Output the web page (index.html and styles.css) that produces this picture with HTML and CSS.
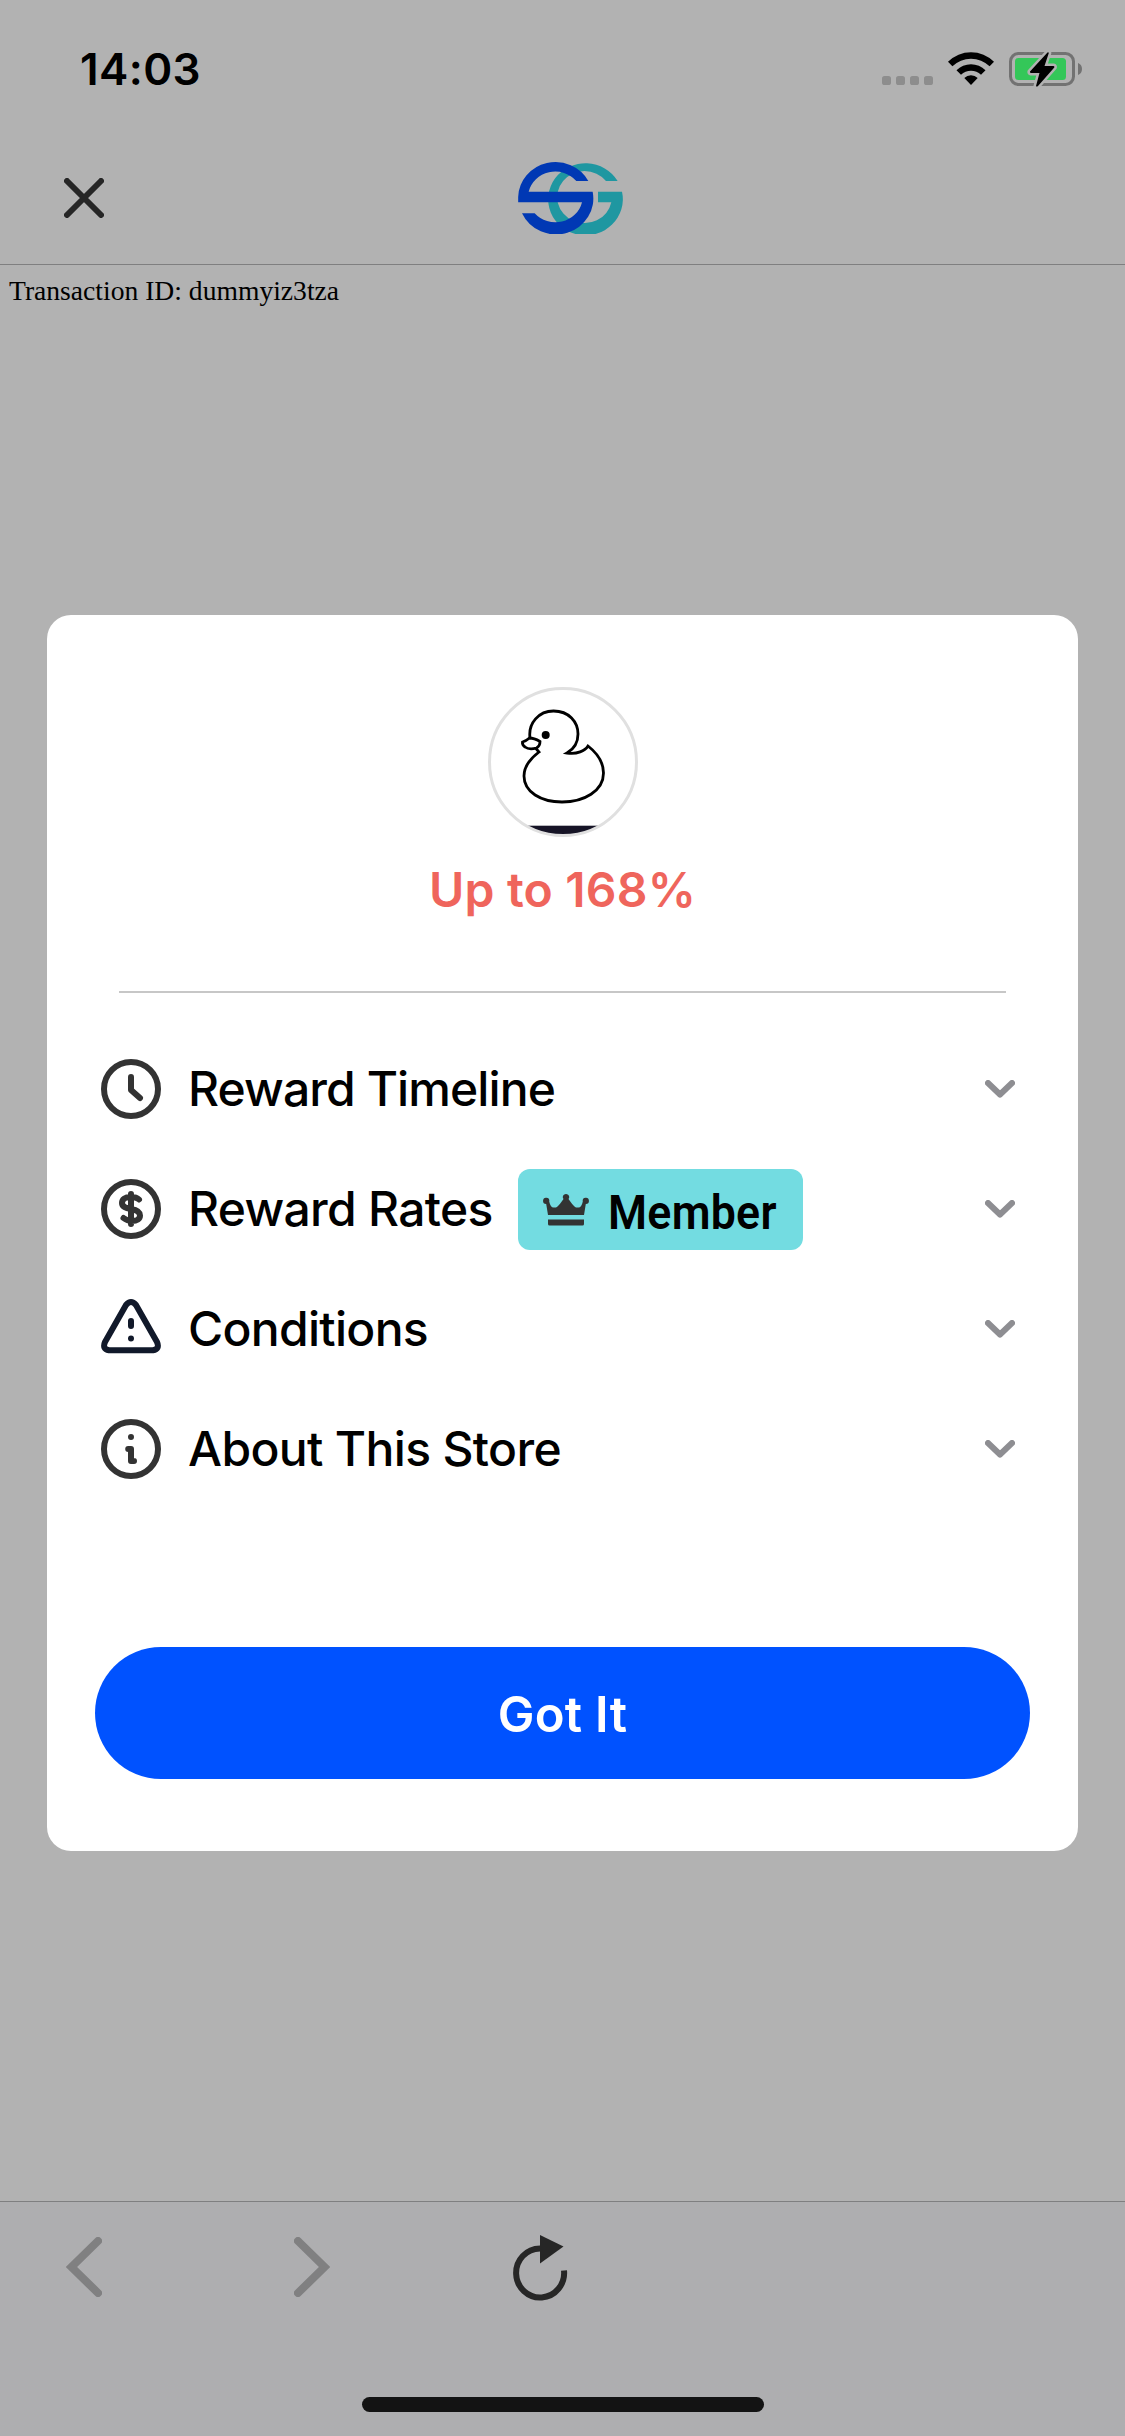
FILE: index.html
```
<!DOCTYPE html>
<html lang="en">
<head>
<meta charset="utf-8">
<title>Store rewards</title>
<link rel="stylesheet" href="styles.css">
</head>
<body>
<div class="screen">
  <div class="status">
    <span class="time">14:03</span>
    <svg class="status-icons" width="202" height="36" viewBox="0 0 202 36">
      <g fill="#8d8d8d"><rect x="0" y="25" width="9" height="9" rx="2.6"/><rect x="14" y="25" width="9" height="9" rx="2.6"/><rect x="28" y="25" width="9" height="9" rx="2.6"/><rect x="42" y="25" width="9" height="9" rx="2.6"/></g>
      <path d="M66 10.8A32.500 32.500 0 0 1 112 10.800L107.600 15.300A26.500 26.500 0 0 0 70.400 15.300ZM74.500 19.200A20.500 20.500 0 0 1 103.500 19.200L99 23.700A14.500 14.500 0 0 0 79 23.700ZM82.300 27A9.700 9.700 0 0 1 95.700 27L89 34Z"/>
      <rect x="128.500" y="2.500" width="63" height="31" rx="8" fill="none" stroke="#727272" stroke-width="3"/>
      <rect x="133" y="7" width="51" height="22" rx="3.500" fill="#34c759"/>
      <path d="M196 12Q200 13.500 200 18Q200 22.500 196 24Z" fill="#727272"/>
      <path d="M165.500 1.500L148 20.500Q147.500 21.800 149 22H157.500L154 35Q154.500 36 156 35L172.300 16.500Q172.800 15.200 171.500 15H162.500L166.800 2Q166.500 1 165.500 1.500Z" stroke="#b2b2b2" stroke-width="5" paint-order="stroke"/>
    </svg>
  </div>
  <div class="header">
    <svg class="close" width="40" height="40" viewBox="0 0 40 40"><path d="M3 3L37 37M37 3L3 37" stroke="#262626" stroke-width="6" stroke-linecap="round"/></svg>
    <svg class="logo" width="105" height="73" viewBox="54 66 315 219">
      <path fill="#1f97a1" d="M353 126A112 108 0 1 0 366 158H294V190H334A82 78 0 1 1 318 126Z"/>
      <path fill="#0038b4" d="M54.500 189.500V174A112 108 0 0 1 265 126H229A82 78 0 0 0 86 158H278A112 108 0 0 1 66 223H104A82 78 0 0 0 246 189.500Z"/>
    </svg>
  </div>
  <main class="page">
    <p class="transaction">Transaction ID: dummyiz3tza</p>
    <section class="modal">
      <svg class="avatar" width="150" height="150" viewBox="0 0 150 150">
        <defs><clipPath id="disc"><circle cx="75" cy="75" r="74"/></clipPath></defs>
        <rect x="0" y="138.700" width="150" height="12" fill="#161426" clip-path="url(#disc)"/>
        <circle cx="75" cy="75" r="73.500" fill="none" stroke="#e0e0e0" stroke-width="3"/>
        <g fill="none" stroke="#000" stroke-width="2.800" stroke-linejoin="miter">
          <path d="M42 51C40 36 51 24 65.500 24C81 24 90 35 90 47C90 55 86 62 79 66C89 67.500 97 64 100 59C109 66 115.500 74 115.500 86C115.500 104 96 115 74 115C53 115 36 105 36 89C36 79 43 71 51 65L47.500 61"/>
          <path d="M34.500 55Q38 54 41.500 51Q46 51 52 54.500Q52 59 48.500 61Q41 63 37 60Q34 58 34.500 55Z"/>
        </g>
        <circle cx="57.700" cy="48" r="4" fill="#000"/>
      </svg>
      <h1 class="rate">Up to 168%</h1>
      <hr class="divider">
      <ul class="rows">
        <li class="row">
          <svg class="icon" viewBox="0 0 60 60"><circle cx="30" cy="30" r="27"/><path d="M30 18V31L39 39"/></svg>
          <span class="label label-timeline">Reward Timeline</span>
          <svg class="chevron" viewBox="0 0 30 18"><path d="M3 3L15 14.500L27 3"/></svg>
        </li>
        <li class="row">
          <svg class="icon" viewBox="0 0 60 60"><circle cx="30" cy="30" r="27"/><path d="M38 20.500C36 18.500 33 18 29.500 18C24 18 21 20.500 21 24C21 28 25 29 30 30C36 31 39 33 39 36.500C39 40 36 42 31 42C27 42 25 41 22.500 39M30 15V45"/></svg>
          <span class="label label-rates">Reward Rates</span>
          <span class="badge">
            <svg class="crown" width="46" height="33" viewBox="0 0 46 33"><path d="M5 22L3.200 11A3.100 3.100 0 1 1 6.200 8.500Q7.500 14.500 10.500 14.500H13Q15 14 20.500 6A3.100 3.100 0 1 1 25.500 6Q31 14 33 14.500H35.500Q38.500 14.500 39.800 8.500A3.100 3.100 0 1 1 42.800 11L41 22ZM5 26.500H41V31Q41 32.500 39.500 32.500H6.500Q5 32.500 5 31Z" fill="#333"/></svg>
            <span class="badge-text">Member</span>
          </span>
          <svg class="chevron" viewBox="0 0 30 18"><path d="M3 3L15 14.500L27 3"/></svg>
        </li>
        <li class="row">
          <svg class="icon icon-warn" viewBox="0 0 60 60"><path d="M25 6Q30 0 35 6L56 43Q59 50 52 51.300H8Q1 50 4 43ZM30 22V27M30 39.500V39.600"/></svg>
          <span class="label label-conditions">Conditions</span>
          <svg class="chevron" viewBox="0 0 30 18"><path d="M3 3L15 14.500L27 3"/></svg>
        </li>
        <li class="row">
          <svg class="icon" viewBox="0 0 60 60"><circle cx="30" cy="30" r="27"/><path d="M30 18V18.100M27.200 30H30V42H33"/></svg>
          <span class="label label-about">About This Store</span>
          <svg class="chevron" viewBox="0 0 30 18"><path d="M3 3L15 14.500L27 3"/></svg>
        </li>
      </ul>
      <button class="confirm">Got It</button>
    </section>
  </main>
  <footer class="toolbar">
    <div class="nav">
      <svg width="36" height="60" viewBox="0 0 36 60"><path d="M32 4L5.500 30L32 56"/></svg>
      <svg class="forward" width="36" height="60" viewBox="0 0 36 60"><path d="M4 4L30.500 30L4 56"/></svg>
      <svg class="reload" width="56" height="66" viewBox="0 0 56 66"><path d="M51 35.500A24 24.500 0 1 1 27 13.500" fill="none" stroke="#262626" stroke-width="6"/><path d="M27 0L50.500 11.500L27 28.500Z" fill="#262626"/></svg>
    </div>
    <div class="home"></div>
  </footer>
</div>
</body>
</html>
```
FILE: styles.css
```
* { box-sizing: border-box; }
body { margin: 0; font-family: Inter, "Liberation Sans", sans-serif; }
svg { display: block; flex: none; }
.screen { width: 1125px; height: 2436px; background: #b2b2b2; display: flex; flex-direction: column; overflow: hidden; }
.status { height: 132px; padding: 0 41px 0 80px; display: flex; justify-content: space-between; align-items: flex-start; }
.time { margin-top: 42px; font-size: 44px; line-height: 54px; font-weight: 600; letter-spacing: 0.4px; }
.status-icons { margin-top: 51px; }
.header { height: 133px; border-bottom: 1px solid #7f7f80; display: flex; align-items: flex-start; padding-left: 64px; }
.close { margin-top: 46px; }
.logo { margin: 29px 0 0 414px; }
.page { height: 1936px; }
.transaction { margin: 0; height: 350px; padding: 9px 0 0 9px; font: 27.600px/34px "Liberation Serif", serif; }
.modal { margin: 0 47px; height: 1236px; border-radius: 24px; background: #fff; display: flex; flex-direction: column; align-items: center; padding-top: 72px; }
.rate { margin: 23px 0 0; font-size: 48px; line-height: 60px; font-weight: 600; letter-spacing: 0.2px; color: #ef655c; white-space: nowrap; }
.divider { margin: 71px 0 0; width: 887px; height: 2px; border: 0; background: #c7c7c7; }
.rows { margin: 36px 0 0; padding: 0; width: 100%; list-style: none; }
.row { height: 120px; display: flex; align-items: center; padding: 0 63px 0 54px; }
.icon { width: 60px; height: 60px; fill: none; stroke: #333; stroke-width: 6; stroke-linecap: round; stroke-linejoin: round; }
.icon-warn { stroke: #11192a; }
.label { margin-left: 27px; font-size: 48px; line-height: 60px; font-weight: 500; white-space: nowrap; }
.label-timeline { letter-spacing: -0.9px; }
.label-rates { letter-spacing: -0.7px; }
.label-conditions { letter-spacing: -0.7px; }
.label-about { letter-spacing: -0.65px; }
.badge { margin-left: 25px; width: 285px; height: 81px; border-radius: 12px; background: #73dce1; display: flex; align-items: center; padding-left: 25px; }
.badge-text { margin: 7px 0 0 19px; font: 600 48px/60px Roboto, sans-serif; letter-spacing: 0.3px; transform: scaleX(0.93); transform-origin: left; }
.chevron { width: 30px; height: 18px; margin-left: auto; fill: none; stroke: #8e8e92; stroke-width: 6; stroke-linecap: round; stroke-linejoin: round; }
.confirm { margin: 138px 0 0; width: 935px; height: 132px; border: 0; border-radius: 66px; background: #0052ff; color: #fff; font: 600 49px/60px Inter, sans-serif; letter-spacing: 0.3px; padding: 3px 0 0; }
.toolbar { height: 235px; border-top: 1px solid #7f7f80; background: #aeaeb0; }
.nav { height: 195px; padding: 35px 0 0 66px; display: flex; align-items: flex-start; fill: none; stroke: #808081; stroke-width: 8; stroke-linecap: round; }
.forward { margin-left: 192px; }
.reload { margin: -2px 0 0 183px; stroke: none; stroke-linecap: butt; }
.home { width: 402px; height: 15px; margin-left: 362px; border-radius: 8px; background: #131313; }
```
